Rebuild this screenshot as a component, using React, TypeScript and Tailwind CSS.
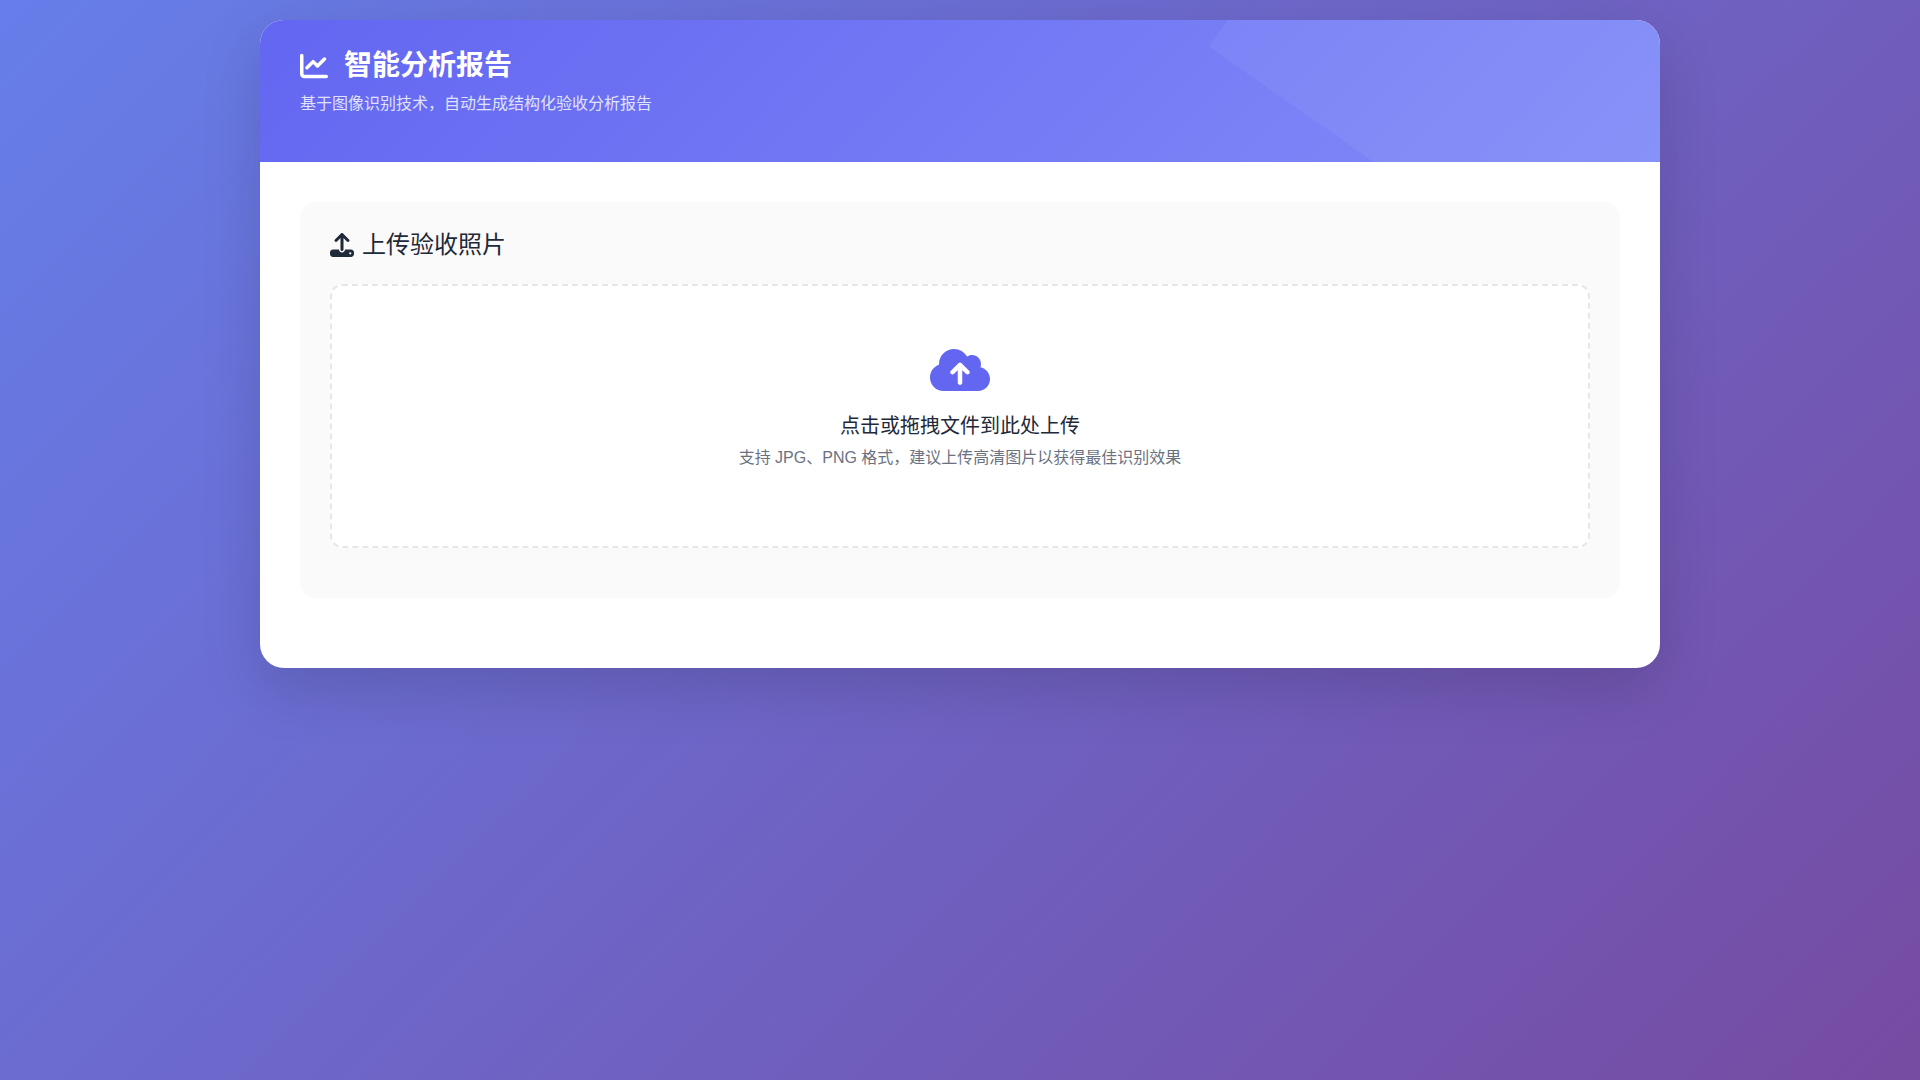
import { FaChartLine, FaCloudArrowUp, FaUpload } from "react-icons/fa6";

export default function App() {
  return (
    <div className="min-h-screen bg-[linear-gradient(135deg,#667eea_0%,#764ba2_100%)] p-5 font-['Liberation_Sans','Noto_Sans_CJK_SC',sans-serif] text-base leading-6 text-gray-800">
      <main className="mx-auto max-w-[1400px] overflow-hidden rounded-3xl bg-white pb-[30px] shadow-[0_20px_60px_rgba(0,0,0,0.15)]">
        <header className="relative overflow-hidden bg-[linear-gradient(135deg,#6366f1_0%,#818cf8_100%)] px-10 pt-[30px] pb-[46px] text-white">
          <div className="absolute -top-1/2 -right-[10%] h-[200%] w-2/5 rotate-[35deg] bg-white/5" aria-hidden="true" />
          <h1 className="relative flex items-center gap-4 text-[28px] leading-8 font-bold">
            <FaChartLine aria-hidden="true" />
            智能分析报告
          </h1>
          <p className="relative mt-[10px] opacity-80">基于图像识别技术，自动生成结构化验收分析报告</p>
        </header>
        <div className="p-10">
          <section className="rounded-2xl bg-[#fafafa] px-[30px] pt-[30px] pb-[50px]">
            <h2 className="flex items-center gap-2 text-2xl leading-[26px]">
              <FaUpload aria-hidden="true" />
              上传验收照片
            </h2>
            <label className="relative mt-[26px] flex cursor-pointer flex-col items-center rounded-xl border-2 border-dashed border-gray-200 bg-white px-10 pt-[60px] pb-[76px] text-center">
              <FaCloudArrowUp className="h-12 w-[60px] text-[#6366f1]" aria-hidden="true" />
              <span className="mt-5 text-xl leading-6">点击或拖拽文件到此处上传</span>
              <span className="mt-2 text-gray-500">支持 JPG、PNG 格式，建议上传高清图片以获得最佳识别效果</span>
              <input type="file" accept="image/jpeg,image/png" className="sr-only" />
            </label>
          </section>
        </div>
      </main>
    </div>
  );
}
